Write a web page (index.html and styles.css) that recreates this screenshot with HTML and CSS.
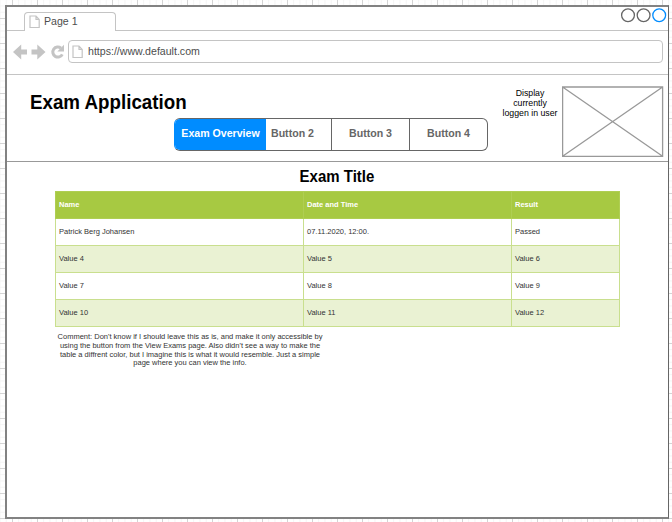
FILE: index.html
```html
<!DOCTYPE html>
<html lang="en">
<head>
<meta charset="utf-8">
<title>Exam Application</title>
<link rel="stylesheet" href="styles.css">
</head>
<body>
<div class="window">
  <div class="tabs">
    <div class="tab">
      <svg class="page" width="12" height="14" viewBox="0 0 12 14"><path d="M1 1h6l3.200 3.400V12.500H1zM7 1v3.400h3.200"/></svg>
      <span>Page 1</span>
    </div>
    <svg class="controls" width="48" height="17" viewBox="0 0 48 17"><circle cx="8" cy="8.300" r="6.400"/><circle cx="23.600" cy="8.300" r="6.400"/><circle class="active" cx="39.200" cy="8.300" r="6.400"/></svg>
  </div>
  <div class="toolbar">
    <svg class="nav" width="54" height="16" viewBox="0 0 54 16"><path d="M0 8l8.200-7.500V5.500H14v5H8.200v5z"/><path d="M32.500 8l-8.200-7.500V5.500H18.500v5h5.800v5z"/><path class="reload" d="M48 4.200A5 5 0 1 0 49.300 10.300"/><path d="M51 .8v6.700h-6.700z"/></svg>
    <div class="address">
      <svg class="page" width="12" height="14" viewBox="0 0 12 14"><path d="M1 1h6l3.200 3.400V12.500H1zM7 1v3.400h3.200"/></svg>
      <span>https://www.default.com</span>
    </div>
  </div>
  <header class="header">
    <h1>Exam Application</h1>
    <nav class="buttons">
      <span class="selected">Exam Overview</span><span class="second">Button 2</span><span>Button 3</span><span>Button 4</span>
    </nav>
    <p class="user">Display<br>currently<br>loggen in user</p>
    <svg class="photo" width="102" height="71" viewBox="0 0 102 71"><path d="M.6 1h100v69.300H.6zL100.600 70.300M100.600 1L.6 70.300"/></svg>
  </header>
  <main>
    <h2>Exam Title</h2>
    <table>
      <colgroup><col class="c1"><col class="c2"><col class="c3"></colgroup>
      <tr><th>Name</th><th>Date and Time</th><th>Result</th></tr>
      <tr><td>Patrick Berg Johansen</td><td>07.11.2020, 12:00.</td><td>Passed</td></tr>
      <tr><td>Value 4</td><td>Value 5</td><td>Value 6</td></tr>
      <tr><td>Value 7</td><td>Value 8</td><td>Value 9</td></tr>
      <tr><td>Value 10</td><td>Value 11</td><td>Value 12</td></tr>
    </table>
    <p class="comment">Comment: Don't know if I should leave this as is, and make it only accessible by<br>using the button from the View Exams page. Also didn't see a way to make the<br>table a diffrent color, but I imagine this is what it would resemble. Just a simple<br>page where you can view the info.</p>
  </main>
</div>
</body>
</html>
```
FILE: styles.css
```css
* { box-sizing: border-box; }
body {
  margin: 0;
  padding: 5px 3px 3px 5px;
  height: 522px;
  overflow: hidden;
  font-family: "Liberation Sans", Arial, sans-serif;
  background-color: #fff;
  background-image:
    linear-gradient(90deg, #d4d4d4 1px, transparent 1px),
    linear-gradient(#d4d4d4 1px, transparent 1px),
    linear-gradient(90deg, #f3f3f3 1px, transparent 1px),
    linear-gradient(#f3f3f3 1px, transparent 1px);
  background-size: 25px 25px, 25px 25px, 6.25px 6.25px, 6.25px 6.25px;
  background-position: 12px 18px;
}
h1, h2, p { margin: 0; }
span, h1, h2 { white-space: nowrap; }
svg { display: block; flex: none; fill: none; }
.window {
  height: 514px;
  background: #fff;
  border: 2px solid #828282;
  border-right: 1px solid #666;
}
.tabs {
  height: 24px;
  border-bottom: 1px solid #c4c4c4;
  display: flex;
  justify-content: space-between;
}
.tab {
  width: 92px;
  height: 19px;
  margin: 5px 0 0 17px;
  padding-left: 4px;
  display: flex;
  align-items: center;
  gap: 3px;
  background: #fff;
  border: 1px solid #c4c4c4;
  border-bottom: 0;
  border-radius: 4px 4px 0 0;
  font-size: 10.6px;
  color: #4d4d4d;
}
.tab span { padding-bottom: 2px; }
.page { stroke: #c4c4c4; stroke-width: 1.2; }
.controls { stroke: #666; stroke-width: 1.3; }
.controls .active { stroke: #008cff; }
.toolbar {
  height: 44px;
  border-bottom: 1px solid #c4c4c4;
  display: flex;
  padding: 9px 5px 0 6px;
}
.nav { fill: #c4c4c4; margin: 4px 1px 0 0; }
.nav .reload { fill: none; stroke: #c4c4c4; stroke-width: 3; }
.address {
  flex: 1;
  height: 23px;
  padding-left: 3px;
  display: flex;
  align-items: center;
  gap: 4px;
  border: 1px solid #c4c4c4;
  border-radius: 4px;
  font-size: 10.6px;
  color: #4d4d4d;
}
.address span { padding-bottom: 2px; }
.header {
  height: 87px;
  border-bottom: 1px solid #999;
  display: flex;
}
h1 {
  width: 167px;
  height: 44px;
  padding: 16px 0 0 23px;
  font-size: 18.75px;
  line-height: 22px;
  transform: scaleY(1.06);
}
.buttons {
  width: 314px;
  height: 33px;
  margin-top: 43px;
  flex: none;
  display: grid;
  grid-template-columns: 91px 65px 78px 1fr;
  border: 1px solid #666;
  border-left-color: #008cff;
  border-radius: 6px;
  overflow: hidden;
  color: #666;
  font: bold 10.6px/28px "Liberation Sans", Arial, sans-serif;
  text-align: center;
}
.buttons span + span + span { border-left: 1px solid #666; }
.buttons .second { text-align: left; padding-left: 5px; }
.buttons .selected { background: #008cff; color: #fff; }
.user {
  width: 74px;
  padding: 13px 0 0 10px;
  flex: none;
  display: flex;
  justify-content: center;
  white-space: nowrap;
  font-size: 8.75px;
  line-height: 10px;
  text-align: center;
}
.photo { margin-top: 11px; stroke: #999; stroke-width: 1.3; }
main { padding-left: 48px; }
h2 {
  width: 564px;
  margin-top: 5px;
  height: 24px;
  font-size: 15px;
  line-height: 20px;
  text-align: center;
  transform: scaleY(1.04);
}
table {
  width: 565px;
  table-layout: fixed;
  border-collapse: collapse;
  font-size: 7.5px;
  line-height: 9px;
  color: #333;
}
table { width: 564px; }
.c1 { width: 248px; }
.c2 { width: 208px; }
.c3 { width: 108px; }
tr { height: 27px; }
th, td { padding: 0 2px 2px 3px; border: 1px solid #c9df8e; text-align: left; }
th { background: #a7c942; color: #fff; border-color: #afce53; }
tr:nth-child(odd) td { background: #eaf2d3; }
.comment {
  width: 270px;
  margin-top: 6px;
  font-size: 7.5px;
  line-height: 8.8px;
  text-align: center;
  color: #333;
  white-space: nowrap;
}
```
